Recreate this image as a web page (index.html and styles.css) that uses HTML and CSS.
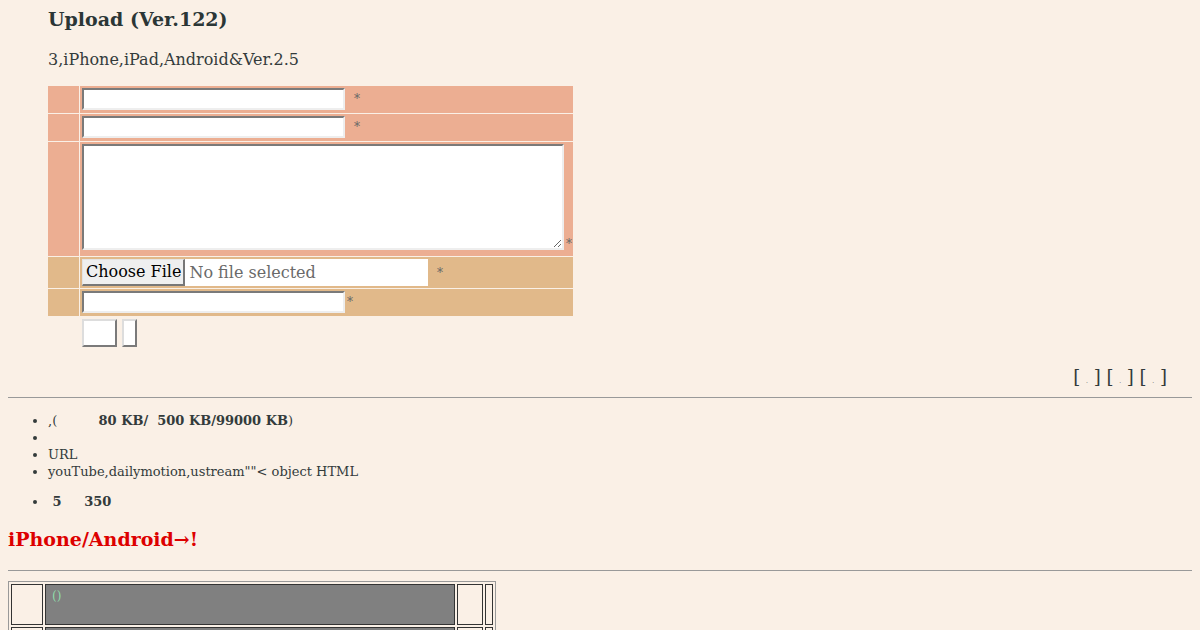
FILE: index.html
```html
<!DOCTYPE html>
<html lang="ja">
<head>
    <meta charset="UTF-8">
    <title>Upload (Ver.122)</title>
    <link rel="stylesheet" href="styles.css">
</head>
<body>
    <div class="main">
        <h2 class="title">Upload (Ver.122)</h2>
        <p class="note">3,iPhone,iPad,Android&amp;Ver.2.5</p>

        <!-- 投稿フォーム -->
        <form class="post-form" onsubmit="return false;">
            <table class="form-table">
                <tr class="row-a">
                    <td class="label"></td>
                    <td><div class="wrap"><input type="text" class="text-in"><span class="req">*</span></div></td>
                </tr>
                <tr class="row-a">
                    <td class="label"></td>
                    <td><div class="wrap"><input type="text" class="text-in"><span class="req">*</span></div></td>
                </tr>
                <tr class="row-a">
                    <td class="label"></td>
                    <td><div class="wrap wrap-area"><textarea class="comment"></textarea><span class="req req-area">*</span></div></td>
                </tr>
                <tr class="row-b">
                    <td class="label"></td>
                    <td>
                        <div class="wrap wrap-file">
                            <label class="file-box">
                                <input type="file" class="file-hidden">
                                <span class="file-btn">Choose File</span>
                                <span class="file-name">No file selected</span>
                            </label>
                            <span class="req req-file">*</span>
                        </div>
                    </td>
                </tr>
                <tr class="row-b">
                    <td class="label"></td>
                    <td><div class="wrap"><input type="text" class="text-in"><span class="req req-tight">*</span></div></td>
                </tr>
                <tr>
                    <td></td>
                    <td>
                        <div class="buttons">
                            <input type="submit" value="" class="btn-send">
                            <input type="reset" value="" class="btn-reset">
                        </div>
                    </td>
                </tr>
            </table>
        </form>
    </div>

    <div class="nav">[ <small>.</small> ] [ <small>.</small> ] [ <small>.</small> ]</div>
    <hr class="hr-nav">

    <ul class="rules">
        <li>,(&nbsp;&nbsp;&nbsp;&nbsp;&nbsp;&nbsp;&nbsp;&nbsp;&nbsp; <b>80 KB/&nbsp; 500 KB/99000 KB</b>)</li>
        <li></li>
        <li>URL</li>
        <li>youTube,dailymotion,ustream""&lt; object HTML</li>
    </ul>
    <ul class="rules limit">
        <li><b>&nbsp;5&nbsp;&nbsp;&nbsp;&nbsp; 350</b></li>
    </ul>

    <h3 class="mobile">iPhone/Android→!</h3>
    <hr class="hr-low">

    <!-- 記事一覧 -->
    <table class="thread">
        <tr>
            <td class="cell-side"></td>
            <td class="cell-head">()</td>
            <td class="cell-num"></td>
            <td class="cell-edge"></td>
        </tr>
        <tr>
            <td class="cell-side"></td>
            <td class="cell-head"></td>
            <td class="cell-num"></td>
            <td class="cell-edge"></td>
        </tr>
    </table>
</body>
</html>
```

FILE: styles.css
```css
body {
    margin: 8px;
    background: #faf0e6;
    color: #333b3b;
    font-family: "DejaVu Serif", serif;
    overflow: hidden;
}

.main {
    margin-left: 40px;
}

.title {
    font-size: 19px;
    margin: 0;
    line-height: 22px;
    color: #2b3636;
}

.note {
    font-size: 16px;
    margin: 20px 0 16px;
    line-height: 19px;
}

.post-form {
    margin: 0;
}

.form-table {
    border-spacing: 1px;
    margin-left: -1px;
    width: 527px;
}

.form-table td {
    padding: 0;
}

.form-table .label {
    width: 31px;
}

.row-a td {
    background: #ecae92;
}

.row-b td {
    background: #e1b98a;
}

.wrap {
    display: flex;
    align-items: center;
    padding: 2px 0 3px 2px;
}

.wrap-area {
    align-items: flex-end;
    padding-bottom: 6px;
}

.wrap-file {
    padding-bottom: 2px;
}

.text-in {
    width: 263px;
    height: 22px;
    box-sizing: border-box;
    border: 2px solid #eee;
    border-top-color: #7a7a7a;
    border-left-color: #7a7a7a;
    background: #fff;
    margin: 0;
    font-size: 14px;
}

.comment {
    width: 482px;
    height: 106px;
    box-sizing: border-box;
    border: 2px solid #eee;
    border-top-color: #7a7a7a;
    border-left-color: #7a7a7a;
    background: #fff;
    margin: 0;
    display: block;
}

.file-box {
    display: flex;
    align-items: center;
    width: 346px;
    height: 27px;
    background: #fff;
    font-family: "DejaVu Serif", serif;
}

.file-hidden {
    display: none;
}

.file-btn {
    box-sizing: border-box;
    height: 27px;
    line-height: 23px;
    padding: 0 2px 0 3px;
    font-family: "DejaVu Serif", serif;
    font-size: 16px;
    color: #000;
    background: #efefef;
    border: 1px solid #e4e4e4;
    border-right: 2px solid #777;
    border-bottom: 2px solid #777;
}

.file-name {
    font-family: "DejaVu Serif", serif;
    font-size: 16px;
    color: #6a6a6a;
    margin-left: 4px;
}

.req {
    font-size: 12px;
    color: #666;
    margin-left: 9px;
    line-height: 12px;
}

.req-area {
    margin-left: 2px;
}

.req-tight {
    margin-left: 2px;
}

.buttons {
    display: flex;
    gap: 5px;
    padding: 2px 0 0 2px;
}

.btn-send,
.btn-reset {
    height: 28px;
    box-sizing: border-box;
    background: #fff;
    border: 2px solid #ddd;
    border-right-color: #7a7a7a;
    border-bottom-color: #7a7a7a;
    padding: 0;
    margin: 0;
}

.btn-send {
    width: 35px;
}

.btn-reset {
    width: 15px;
}

.nav {
    text-align: right;
    font-size: 18px;
    margin: 19px 25px 0 0;
    line-height: 20px;
}

.nav small {
    font-size: 6px;
    line-height: 0;
}

hr {
    border: 0;
    border-top: 1px solid #999;
    margin: 8px 0;
}

.hr-nav {
    margin-top: 10px;
}

.rules {
    font-size: 13px;
    line-height: 17px;
    margin: 14px 0 0;
    padding-left: 40px;
}

.rules li {
    min-height: 17px;
}

.limit {
    margin-top: 13px;
}

.mobile {
    color: #dd0000;
    font-size: 19px;
    line-height: 22px;
    margin: 18px 0 20px;
}

.hr-low {
    margin-bottom: 10px;
}

.thread {
    border: 1px solid #999;
    border-spacing: 2px;
    width: 488px;
}

.thread td {
    border: 1px solid #333;
    height: 35px;
    padding: 0;
}

.cell-side {
    width: 30px;
}

.cell-head {
    background: #808080;
    color: #8fdcaa;
    font-size: 12px;
    vertical-align: top;
    padding: 4px 0 0 6px !important;
}

.cell-num {
    width: 24px;
}

.cell-edge {
    width: 6px;
}
```
